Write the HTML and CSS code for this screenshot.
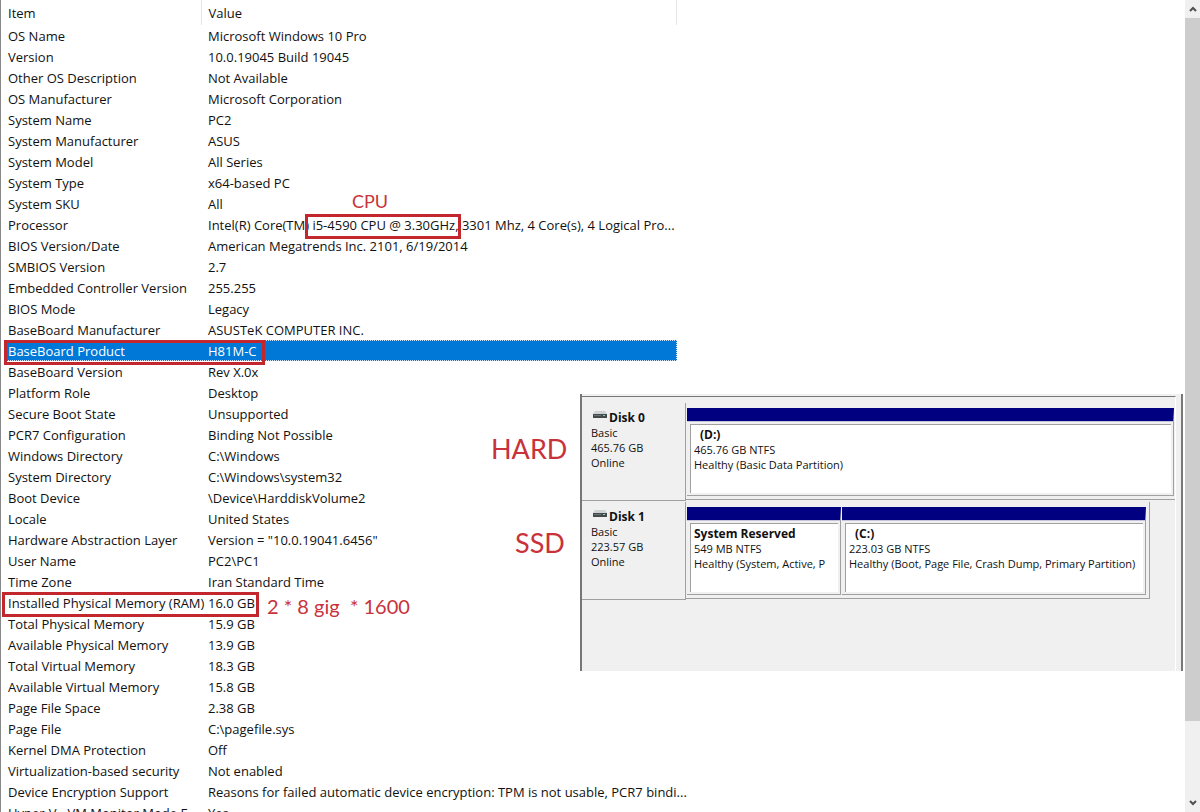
FILE: index.html
```html
<!DOCTYPE html>
<html lang="en">
<head>
<meta charset="UTF-8" />
<meta name="viewport" content="width=device-width, initial-scale=1" />
<title>System Summary</title>
<link rel="stylesheet" href="styles.css">
</head>
<body>
<main class="summary">
  <table class="info">
    <thead>
      <tr><th class="item" scope="col">Item</th><th scope="col">Value</th></tr>
    </thead>
    <tbody>
      <tr><td>OS Name</td><td>Microsoft Windows 10 Pro</td></tr>
      <tr><td>Version</td><td>10.0.19045 Build 19045</td></tr>
      <tr><td>Other OS Description</td><td>Not Available</td></tr>
      <tr><td>OS Manufacturer</td><td>Microsoft Corporation</td></tr>
      <tr><td>System Name</td><td>PC2</td></tr>
      <tr><td>System Manufacturer</td><td>ASUS</td></tr>
      <tr><td>System Model</td><td>All Series</td></tr>
      <tr><td>System Type</td><td>x64-based PC</td></tr>
      <tr><td>System SKU</td><td>All</td></tr>
      <tr><td>Processor</td><td>Intel(R) Core(TM) i5-4590 CPU @ 3.30GHz, 3301 Mhz, 4 Core(s), 4 Logical Pro...</td></tr>
      <tr><td>BIOS Version/Date</td><td>American Megatrends Inc. 2101, 6/19/2014</td></tr>
      <tr><td>SMBIOS Version</td><td>2.7</td></tr>
      <tr><td>Embedded Controller Version</td><td>255.255</td></tr>
      <tr><td>BIOS Mode</td><td>Legacy</td></tr>
      <tr><td>BaseBoard Manufacturer</td><td>ASUSTeK COMPUTER INC.</td></tr>
      <tr class="selected"><td>BaseBoard Product</td><td>H81M-C</td></tr>
      <tr><td>BaseBoard Version</td><td>Rev X.0x</td></tr>
      <tr><td>Platform Role</td><td>Desktop</td></tr>
      <tr><td>Secure Boot State</td><td>Unsupported</td></tr>
      <tr><td>PCR7 Configuration</td><td>Binding Not Possible</td></tr>
      <tr><td>Windows Directory</td><td>C:\Windows</td></tr>
      <tr><td>System Directory</td><td>C:\Windows\system32</td></tr>
      <tr><td>Boot Device</td><td>\Device\HarddiskVolume2</td></tr>
      <tr><td>Locale</td><td>United States</td></tr>
      <tr><td>Hardware Abstraction Layer</td><td>Version = "10.0.19041.6456"</td></tr>
      <tr><td>User Name</td><td>PC2\PC1</td></tr>
      <tr><td>Time Zone</td><td>Iran Standard Time</td></tr>
      <tr><td>Installed Physical Memory (RAM)</td><td>16.0 GB</td></tr>
      <tr><td>Total Physical Memory</td><td>15.9 GB</td></tr>
      <tr><td>Available Physical Memory</td><td>13.9 GB</td></tr>
      <tr><td>Total Virtual Memory</td><td>18.3 GB</td></tr>
      <tr><td>Available Virtual Memory</td><td>15.8 GB</td></tr>
      <tr><td>Page File Space</td><td>2.38 GB</td></tr>
      <tr><td>Page File</td><td>C:\pagefile.sys</td></tr>
      <tr><td>Kernel DMA Protection</td><td>Off</td></tr>
      <tr><td>Virtualization-based security</td><td>Not enabled</td></tr>
      <tr><td>Device Encryption Support</td><td>Reasons for failed automatic device encryption: TPM is not usable, PCR7 bindi...</td></tr>
      <tr><td>Hyper-V - VM Monitor Mode E...</td><td>Yes</td></tr>
    </tbody>
  </table>

  <!-- red marks over the list -->
  <div class="box box-cpu"></div>
  <div class="box box-board"></div>
  <div class="box box-ram"></div>
  <span class="note note-cpu">CPU</span>
  <span class="note note-ram">2 * 8 gig &nbsp;* 1600</span>
  <span class="note big note-hard">HARD</span>
  <span class="note big note-ssd">SSD</span>

  <!-- disk management panel -->
  <section class="disks">
    <div class="disk-list">
      <div class="disk">
        <div class="disk-label">
          <h2>
            <svg class="drive" width="14" height="8" viewBox="0 0 14 8"><path d="M2 0h10l2 3H0z" fill="#cfd2d2"/><path d="M0 3h14v4H0z" fill="#454b4b"/><path d="M1 4h7v1H1z" fill="#6b7373"/><path d="M10 4h2v1h-2z" fill="#7fd0c0"/></svg>
            Disk 0
          </h2>
          <p>Basic</p>
          <p>465.76 GB</p>
          <p>Online</p>
        </div>
        <div class="volumes">
          <div class="volume">
            <div class="volume-body">
              <h3 class="letter">(D:)</h3>
              <p>465.76 GB NTFS</p>
              <p>Healthy (Basic Data Partition)</p>
            </div>
          </div>
        </div>
      </div>
      <div class="disk">
        <div class="disk-label">
          <h2>
            <svg class="drive" width="14" height="8" viewBox="0 0 14 8"><path d="M2 0h10l2 3H0z" fill="#cfd2d2"/><path d="M0 3h14v4H0z" fill="#454b4b"/><path d="M1 4h7v1H1z" fill="#6b7373"/><path d="M10 4h2v1h-2z" fill="#7fd0c0"/></svg>
            Disk 1
          </h2>
          <p>Basic</p>
          <p>223.57 GB</p>
          <p>Online</p>
        </div>
        <div class="volumes short">
          <div class="volume reserved">
            <div class="volume-body">
              <h3>System Reserved</h3>
              <p>549 MB NTFS</p>
              <p>Healthy (System, Active, P</p>
            </div>
          </div>
          <div class="volume">
            <div class="volume-body">
              <h3 class="letter">(C:)</h3>
              <p>223.03 GB NTFS</p>
              <p>Healthy (Boot, Page File, Crash Dump, Primary Partition)</p>
            </div>
          </div>
        </div>
      </div>
    </div>
  </section>
</main>

<div class="scrollbar">
  <button type="button" aria-label="Scroll up"><svg width="8" height="6" viewBox="0 0 8 6"><path d="M1 5l3-3 3 3" fill="none" stroke="#505050" stroke-width="2"/></svg></button>
  <div class="track"><div class="thumb"></div></div>
  <button type="button" aria-label="Scroll down"><svg width="8" height="6" viewBox="0 0 8 6"><path d="M1 1l3 3 3-3" fill="none" stroke="#505050" stroke-width="2"/></svg></button>
</div>
</body>
</html>
```

FILE: styles.css
```css
* {
  box-sizing: border-box;
}
body {
  margin: 0;
  height: 100vh;
  display: flex;
  overflow: hidden;
  background: #fff;
  color: #111;
  font-family: "Open Sans", "Noto Sans", sans-serif;
  font-size: 13px;
}
h2, h3, p {
  margin: 0;
  font-size: 12px;
  line-height: 15px;
}
.summary {
  position: relative;
  flex: 1;
  overflow: hidden;
  border-left: 1px solid #888;
}

/* item / value list */
.info {
  width: 672px;
  margin-left: 4px;
  table-layout: fixed;
  border-collapse: collapse;
}
.info th,
.info td {
  height: 21px;
  padding: 2px 0 0 3px;
  line-height: 19px;
  font-weight: normal;
  text-align: left;
  white-space: nowrap;
}
.info td + td,
.info th + th {
  padding-left: 7px;
}
.info th {
  height: 25px;
  line-height: 23px;
  border-right: 1px solid #e5e5e5;
}
.info .item {
  width: 196px;
}
.info .selected {
  background: #0078d7;
  color: #fff;
  outline: 1px dotted #cfe4f7;
  outline-offset: -1px;
}

/* red marks */
.box {
  position: absolute;
  height: 25px;
  border: 3px solid #c1272d;
}
.box-cpu {
  left: 304px;
  top: 214px;
  width: 156px;
}
.box-board {
  left: 3px;
  top: 340px;
  width: 261px;
}
.box-ram {
  left: 1px;
  top: 592px;
  width: 257px;
}
.note {
  position: absolute;
  color: #c8323a;
  font-family: Lato, sans-serif;
  font-size: 18px;
  line-height: 24px;
  white-space: nowrap;
}
.big {
  font-size: 27px;
  line-height: 34px;
}
.note-cpu {
  left: 351px;
  top: 189px;
}
.note-ram {
  left: 266px;
  top: 594px;
  font-size: 20px;
}
.note-hard {
  left: 490px;
  top: 432px;
}
.note-ssd {
  left: 514px;
  top: 526px;
}

/* disk panel */
.disks {
  position: absolute;
  left: 579px;
  right: 2px;
  top: 394px;
  height: 277px;
  display: flex;
  padding-top: 2px;
  background: #f0f0f0;
  border-left: 2px solid #777;
  border-right: 2px solid #777;
}
.disks p {
  font-size: 11px;
}
.disk-list {
  flex: 1;
  margin-right: 5px;
  padding-top: 6px;
  border-top: 1px solid #777;
  border-right: 1px solid #fff;
}
.disk {
  display: flex;
  height: 98px;
  margin-bottom: 1px;
}
.disk-label {
  width: 104px;
  padding: 7px 0 0 9px;
  border-right: 1px solid #a0a0a0;
  border-bottom: 1px solid #a0a0a0;
}
.disk-label h2 {
  display: flex;
  gap: 2px;
  padding-left: 2px;
}
.drive {
  margin-top: 1px;
}
.volumes {
  flex: 1;
  display: flex;
  gap: 1px;
  margin-bottom: 1px;
  padding: 5px 1px 3px;
  border-bottom: 1px solid #a0a0a0;
}
.short {
  flex: none;
  width: 464px;
  padding-right: 3px;
  border-right: 1px solid #a0a0a0;
}
.volume {
  flex: 1;
  min-width: 0;
  padding: 3px 2px 2px 3px;
  border-top: 13px solid #000080;
  border-right: 1px solid #a0a0a0;
  border-bottom: 1px solid #a0a0a0;
  box-shadow: inset 0 1px #c4c4dc;
}
.reserved {
  flex: none;
  width: 154px;
}
.volume-body {
  height: 100%;
  padding: 2px 4px 0 3px;
  background: #fff;
  border-left: 1px solid #a0a0a0;
  border-top: 1px solid #a0a0a0;
}
.volume-body p {
  overflow: hidden;
  white-space: nowrap;
}
.volume-body .letter {
  padding-left: 6px;
}

/* scrollbar */
.scrollbar {
  width: 15px;
  display: flex;
  flex-direction: column;
  background: #f0f0f0;
}
.scrollbar button {
  height: 18px;
  padding: 0;
  border: 0;
  background: none;
  display: flex;
  align-items: center;
  justify-content: center;
}
.track {
  flex: 1;
}
.thumb {
  height: 90.6%;
  background: #cdcdcd;
}
```
